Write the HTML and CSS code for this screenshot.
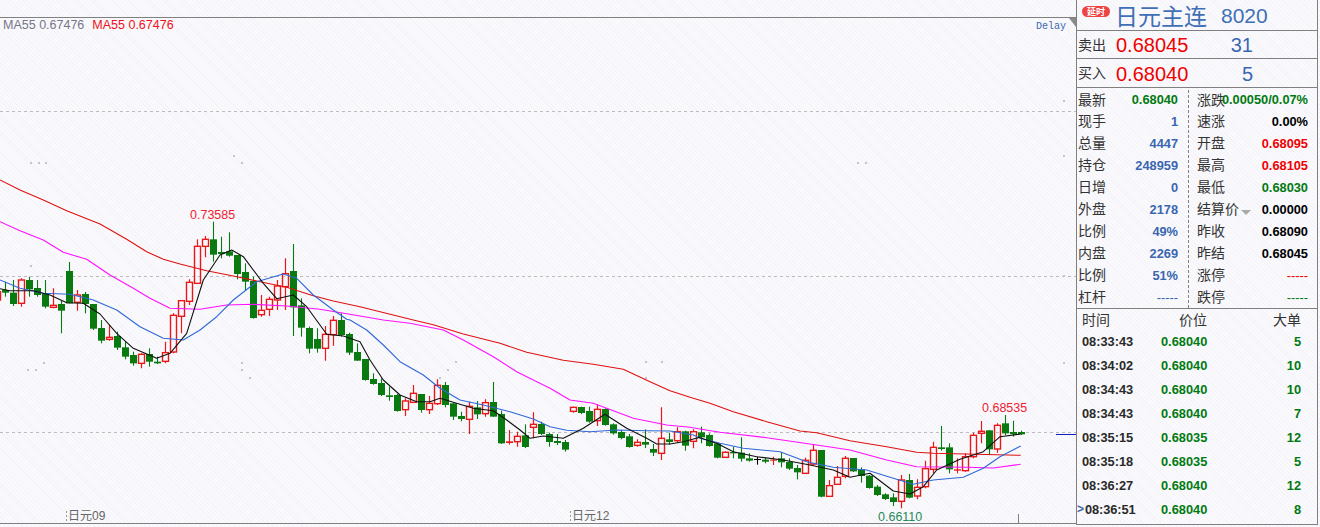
FILE: index.html
```html
<!DOCTYPE html>
<html lang="zh">
<head>
<meta charset="utf-8">
<title>日元主连 8020</title>
<link rel="stylesheet" href="styles.css">
</head>
<body>
<div class="app">
  <section class="chart">
    <div class="legend"><span class="legend-grey">MA55 0.67476</span><span class="legend-red">MA55 0.67476</span></div>
    <span class="delay">Delay</span>
    <svg id="plot" class="plot" width="1076" height="527" viewBox="0 0 1076 527"></svg>
    <span class="wedge"></span>
  </section>
  <aside class="panel">
    <header class="title">
      <span class="badge">延时</span>
      <span class="name">日元主连</span>
      <span class="code">8020</span>
    </header>
    <div class="quote quote-sell"><span class="cn">卖出</span><span class="quote-price">0.68045</span><span class="quote-vol">31</span></div>
    <div class="quote quote-buy"><span class="cn">买入</span><span class="quote-price">0.68040</span><span class="quote-vol">5</span></div>
    <div class="stats">
      <div class="col col-left">
        <div class="row"><span class="cn">最新</span><b class="green">0.68040</b></div>
        <div class="row"><span class="cn">现手</span><b class="blue">1</b></div>
        <div class="row"><span class="cn">总量</span><b class="blue">4447</b></div>
        <div class="row"><span class="cn">持仓</span><b class="blue">248959</b></div>
        <div class="row"><span class="cn">日增</span><b class="blue">0</b></div>
        <div class="row"><span class="cn">外盘</span><b class="blue">2178</b></div>
        <div class="row"><span class="cn">比例</span><b class="blue">49%</b></div>
        <div class="row"><span class="cn">内盘</span><b class="blue">2269</b></div>
        <div class="row"><span class="cn">比例</span><b class="blue">51%</b></div>
        <div class="row"><span class="cn">杠杆</span><span class="dash blue">-----</span></div>
      </div>
      <div class="col col-right">
        <div class="row"><span class="cn">涨跌</span><b class="green change">0.00050/0.07%</b></div>
        <div class="row"><span class="cn">速涨</span><b class="black">0.00%</b></div>
        <div class="row"><span class="cn">开盘</span><b class="red">0.68095</b></div>
        <div class="row"><span class="cn">最高</span><b class="red">0.68105</b></div>
        <div class="row"><span class="cn">最低</span><b class="green">0.68030</b></div>
        <div class="row"><span class="cn settle">结算价<i class="caret"></i></span><b class="black">0.00000</b></div>
        <div class="row"><span class="cn">昨收</span><b class="black">0.68090</b></div>
        <div class="row"><span class="cn">昨结</span><b class="black">0.68045</b></div>
        <div class="row"><span class="cn">涨停</span><span class="dash red">-----</span></div>
        <div class="row"><span class="cn">跌停</span><span class="dash green">-----</span></div>
      </div>
    </div>
    <div class="trades">
      <div class="trade trade-head"><span class="cn">时间</span><span class="cn num">价位</span><span class="cn num">大单</span></div>
      <div class="trade"><b class="time">08:33:43</b><b class="green num">0.68040</b><b class="green num">5</b></div>
      <div class="trade"><b class="time">08:34:02</b><b class="green num">0.68040</b><b class="green num">10</b></div>
      <div class="trade"><b class="time">08:34:43</b><b class="green num">0.68040</b><b class="green num">10</b></div>
      <div class="trade"><b class="time">08:34:43</b><b class="green num">0.68040</b><b class="green num">7</b></div>
      <div class="trade"><b class="time">08:35:15</b><b class="green num">0.68035</b><b class="green num">12</b></div>
      <div class="trade"><b class="time">08:35:18</b><b class="green num">0.68035</b><b class="green num">5</b></div>
      <div class="trade"><b class="time">08:36:27</b><b class="green num">0.68040</b><b class="green num">12</b></div>
      <div class="trade trade-current"><span class="marker">&gt;</span><b class="time">08:36:51</b><b class="green num">0.68040</b><b class="green num">8</b></div>
    </div>
  </aside>
</div>
<script src="chart.js"></script>
</body>
</html>
```
FILE: styles.css
```css
* { box-sizing: border-box; }
html, body { margin: 0; height: 100%; overflow: hidden; }
body {
  background-color: #f8f8fc;
  background-image: repeating-linear-gradient(45deg, #fafafd 0 1px, #f3f3f9 1px 2px, #fafafd 2px 3px);
  font-family: "Liberation Sans", Arial, sans-serif;
  color: #333;
}
.app { display: flex; width: 1320px; height: 527px; }

/* chart */
.chart { position: relative; width: 1076px; height: 527px; flex: none; }
.plot { position: absolute; inset: 0; display: block; }
.legend {
  position: absolute; left: 3px; top: 18px; z-index: 1;
  display: flex; gap: 8px;
  font-size: 12.5px; line-height: 15px; white-space: nowrap;
}
.legend-grey { color: #778; }
.legend-red { color: #f01020; }
.delay {
  position: absolute; left: 1036px; top: 21px; z-index: 1;
  font-family: "Liberation Mono", monospace; font-size: 10px; line-height: 12px; color: #3a66b0;
}
.wedge {
  position: absolute; right: 0; top: 18px; width: 0; height: 0;
  border-top: 9px solid transparent; border-right: 7px solid #8a8a8a; border-bottom: 0 solid transparent;
  transform: scaleY(-1);
}
.t-high { font: 12.5px "Liberation Sans", Arial, sans-serif; fill: #f02030; }
.t-low { font: 12.5px "Liberation Sans", Arial, sans-serif; fill: #1f8a5a; }
.t-axis { font: 12px "Liberation Sans", "Noto Sans CJK SC", sans-serif; fill: #666; }

/* panel */
.panel {
  width: 242px; height: 525px; flex: none;
  border-left: 1px solid #808080; border-right: 1px solid #808080; border-bottom: 1px solid #808080;
  display: flex; flex-direction: column;
}
.cn { font-family: "Noto Sans CJK SC", "Liberation Sans", sans-serif; font-size: 14px; font-weight: 400; color: #333; white-space: nowrap; }
.title {
  height: 31px; flex: none; border-bottom: 1px solid #808080;
  display: flex; align-items: flex-start; padding-left: 5px; white-space: nowrap;
}
.badge {
  margin-top: 6px; width: 28px; height: 11px; border-radius: 6px;
  background: #ee4444; color: #fff;
  font: 700 9px/11px "Noto Sans CJK SC", sans-serif; text-align: center;
}
.name {
  margin-left: 5px; margin-top: 1px;
  font: 400 23px/28px "Noto Sans CJK SC", sans-serif; color: #3f6fb5;
}
.code { margin-left: 14px; margin-top: 2px; font-size: 21px; line-height: 27px; color: #3f6fb5; }
.quote {
  flex: none; border-bottom: 1px solid #808080;
  display: grid; grid-template-columns: 38px 72px 65px; align-items: center; padding-left: 1px;
}
.quote .cn { margin-bottom: 2px; }
.quote-price, .quote-vol { margin-top: 2px; }
.quote-sell { height: 28px; }
.quote-buy { height: 29px; }
.quote-price { font-size: 20px; color: #f00000; }
.quote-vol { font-size: 20px; color: #3a66b0; text-align: right; }

.stats { flex: none; height: 221px; display: grid; grid-template-columns: 111px 1fr; border-bottom: 1px solid #808080; }
.col { display: flex; flex-direction: column; }
.col-left { padding: 0 10px 0 1px; }
.col-right { padding: 0 9px 0 8px; border-left: 1px dashed #808080; margin: 2px 0 1px; }
.col-right .row:first-child { margin-top: -2px; }
.row { height: 22px; flex: none; display: flex; justify-content: space-between; align-items: center; white-space: nowrap; }
.row .cn { margin-bottom: 2px; }
.row:first-child .cn { margin-bottom: 0; }
b, .dash { font-size: 12.8px; font-weight: 700; }
.dash { font-weight: 400; }
.change { margin-left: -4px; }
.green { color: #007a10; }
.blue { color: #3a66b0; }
.red { color: #f00000; }
.black { color: #000; }
.settle { position: relative; }
.caret {
  display: inline-block; margin-left: 2px; vertical-align: -1px; width: 0; height: 0;
  border-left: 5px solid transparent; border-right: 5px solid transparent; border-top: 5px solid #aaa;
}

.trades { flex: 1; }
.trade {
  position: relative; height: 24px; display: grid; grid-template-columns: 79px 46px 1fr;
  padding: 0 16px 0 5px; align-items: center; white-space: nowrap;
}
.trade-head { height: 20px; padding-bottom: 1px; }
.num { text-align: right; }
.time { color: #2a2a2a; }
.trade-current .time { margin-left: 3px; letter-spacing: -0.1px; }
.marker { position: absolute; left: 0; top: 5px; font-size: 12px; line-height: 14px; font-weight: 700; color: #3a66b0; }
```
FILE: chart.js
```js
// Candles: [up?, bodyTop, bodyBottom, high, low] in 3x crop units, with a y origin per block.
var U = 1, D = 0, S = 2, X = 3; // up, down, solid up, doji
var blocks = [
  { y0: 200, first: -1, rows: [
    [U,275,300,260,305],[D,270,278,245,290],[D,278,312,240,318],[U,240,310,235,320],[D,240,268,230,290],[D,264,285,240,290],
    [D,280,320,240,325],[U,316,322,265,325],[D,312,332,300,400],[D,213,310,186,310],[U,285,307,270,332],[D,282,312,276,340],
    [D,312,386,312,390],[D,384,422,360,430],[U,412,418,375,422],[D,408,443,395,450],[D,442,470,425,478],[D,465,490,455,497],
    [U,463,490,460,505],[D,462,485,445,500],[D,485,490,470,492],[U,458,484,425,490],[U,346,456,340,460],[U,302,349,300,400],
    [U,247,304,238,315],[U,139,250,118,250],[U,118,139,108,172],[D,118,164,65,185],[D,156,162,110,175],[D,154,167,97,170],
    [D,165,222,165,238],[D,216,245,190,272],[D,243,354,230,356],[U,331,344,285,350],[U,298,328,290,348],[U,258,300,240,330],
    [U,221,260,175,330],[D,213,322,132,408],[D,316,383,295,410],[D,384,446,380,460],[D,417,446,385,458],[U,403,445,378,482],
    [U,361,404,348,437],[D,360,405,340,410],[D,402,458,398,465],[D,456,482,430,482]
  ]},
  { y0: 320, first: 45, rows: [
    [D,117,180,117,182],[D,177,192,160,194],[D,189,225,175,228],[D,226,231,200,242],[D,225,273,222,275],[U,243,269,235,288],
    [U,220,247,195,248],[D,222,270,222,278],[U,250,269,228,282],[U,196,251,178,255],[D,195,255,186,262],[D,250,290,250,300],
    [D,288,297,275,304],[U,259,298,245,342],[D,262,283,243,297],[U,248,281,238,290],[D,246,290,186,290],[D,282,370,272,372],
    [S,364,369,330,374],[U,349,365,335,380],[D,346,381,313,384],[U,313,322,277,355],[D,312,342,305,345],[D,342,366,338,380],
    [D,363,369,342,375],[D,366,389,360,395],[U,262,274,260,278],[D,261,279,260,282],[D,273,305,260,308],[U,268,302,253,318],
    [D,267,315,265,317],[D,313,340,310,344],[D,336,354,330,358],[D,349,381,342,383],[U,367,376,358,380],[D,366,374,328,384],
    [D,387,398,372,408],[U,355,400,262,420],[D,358,366,338,374],[U,335,362,322,368],[D,334,377,332,392],[U,335,364,328,385],
    [D,337,352,320,370],[D,345,378,340,380]
  ]},
  { y0: 390, first: 89, rows: [
    [D,160,203,158,205],[U,187,202,184,204],[D,186,190,170,205],[D,188,206,142,215],[D,205,212,190,215],[X,207,208,200,224],
    [D,209,215,203,220],[S,209,212,200,225],[D,205,217,187,232],[D,216,236,205,240],[D,234,247,225,268],[U,211,250,203,250],
    [U,181,222,163,225],[D,180,320,180,322],[U,287,319,270,320],[U,262,283,228,285],[U,205,259,198,265],[D,204,244,204,246],
    [D,238,258,232,278],[D,257,294,255,296],[D,290,315,285,318],[D,313,327,310,330],[D,322,336,310,348],[U,270,334,255,355],
    [D,270,323,252,325],[U,292,318,268,328],[U,236,290,212,295],[U,172,238,155,250],[D,172,177,108,182],[D,172,238,160,250],
    [S,238,242,205,250],[U,200,242,190,245],[U,136,200,128,205],[U,124,130,93,160],[D,121,178,121,195],[U,106,177,100,188],
    [D,100,130,75,135],[D,126,132,92,140],[D,126,133,122,135]
  ]}
];

// Moving averages as point runs in the same crop units: [x0, y0, points...]
var lines = [
  { color: "#e01010", runs: [
    [0,0,[0,540,60,570,130,600]],
    [0,200,[200,32,300,72,380,118,440,155,490,178,540,192,620,212,700,228,780,245,860,262,940,287,1000,303,1080,320]],
    [350,320,[190,0,250,14,340,42,450,70,530,97,640,121,730,133,820,148,900,185,960,212,1020,232]],
    [700,390,[30,40,100,65,200,95,300,123,350,128,450,152,560,170,650,187,700,190,962,196]]
  ]},
  { color: "#ff10ff", runs: [
    [0,200,[0,65,60,92,130,120,190,157,260,178,330,225,400,265,450,295,510,325,600,328,680,315,760,313,860,318,960,328,1080,348]],
    [350,320,[100,0,180,10,280,30,340,60,430,110,500,155,600,205,660,240,730,250,850,295,950,315,1020,322]],
    [700,390,[0,117,60,127,200,143,350,165,450,180,560,210,650,230,800,232,880,234,962,223]]
  ]},
  { color: "#3068d8", runs: [
    [0,200,[0,240,60,265,130,280,210,283,280,300,350,330,420,380,490,415,550,420,600,390,650,350,700,300,770,245,850,222,890,235,940,285,1000,330,1040,358]],
    [350,320,[0,0,50,30,100,75,150,125,220,165,270,205,330,240,400,255,480,275,550,297,600,320,650,331,720,335,800,330,890,332,960,333,1030,345]],
    [700,390,[0,145,60,160,130,175,240,185,320,215,400,232,500,240,580,265,640,283,700,270,790,262,850,235,900,200,962,168]]
  ]},
  { color: "#101010", runs: [
    [0,200,[0,266,30,272,100,272,150,285,200,308,250,310,300,342,350,400,400,445,470,475,510,460,560,400,610,240,660,165,695,150,730,170,790,250,830,296,880,285,920,320,980,403,1030,408]],
    [350,320,[0,55,30,65,60,120,100,180,150,225,200,245,240,245,270,235,310,247,370,265,430,272,470,300,510,330,540,355,580,348,640,355,700,325,765,283,830,325,890,355,920,372,960,372,1000,365,1050,352]],
    [700,390,[0,143,50,160,100,185,170,200,250,210,330,225,400,240,450,262,510,250,580,303,630,312,670,290,710,240,780,208,850,185,900,140,962,132]]
  ]}
];

var specks = [[30,162],[38,162],[45,162],[233,155],[241,162],[857,162],[865,162],[1063,155],[1063,275],[1063,362],
  [43,362],[27,369],[35,369],[241,362],[241,369],[249,377],[455,361],[447,369],[439,377],[645,361],[661,361],[645,377],
  [30,265],[1063,100]];

var GREEN = "#087a10", RED = "#e81818", NS = "http://www.w3.org/2000/svg";
var svg = document.getElementById("plot");

function add(tag, attrs, text) {
  var el = document.createElementNS(NS, tag);
  for (var k in attrs) el.setAttribute(k, attrs[k]);
  if (text) el.textContent = text;
  svg.appendChild(el);
  return el;
}
function hline(y, x1, x2, color, dash) {
  var a = { x1: x1, x2: x2, y1: y + 0.5, y2: y + 0.5, stroke: color, "stroke-width": 1 };
  if (dash) a["stroke-dasharray"] = dash;
  add("line", a);
}

// frame and grid
hline(17, 0, 1076, "#808080");
hline(523, 0, 1076, "#808080");
[111, 276, 432].forEach(function (y) { hline(y, 0, 1076, "#bdbdbd", "3 3"); });
specks.forEach(function (p) { add("rect", { x: p[0], y: p[1], width: 2, height: 2, fill: "#c4c4cc" }); });

// candles
blocks.forEach(function (b) {
  b.rows.forEach(function (r, i) {
    var cx = 5.5 + 8 * (b.first + i);
    var py = function (v) { return b.y0 + v / 3; };
    var top = py(r[1]), bot = py(r[2]), hi = py(r[3]), lo = py(r[4]), kind = r[0];
    var color = kind === D ? GREEN : kind === X ? "#000" : RED;
    if (kind === U) {
      add("path", { d: "M" + cx + " " + hi + "V" + top + "M" + cx + " " + bot + "V" + lo, stroke: color, fill: "none", "stroke-width": 1.2 });
      add("rect", { x: cx - 3, y: top, width: 6, height: bot - top, fill: "none", stroke: color, "stroke-width": 1.4 });
    } else {
      add("path", { d: "M" + cx + " " + hi + "V" + lo, stroke: color, fill: "none", "stroke-width": 1.1 });
      add("rect", { x: cx - 3.5, y: top, width: 7, height: Math.max(bot - top, 1), fill: color });
    }
  });
});

// moving averages
lines.forEach(function (l) {
  var pts = [];
  l.runs.forEach(function (run) {
    var xo = run[0], yo = run[1], a = run[2];
    for (var i = 0; i < a.length; i += 2) pts.push((xo + a[i] / 3).toFixed(1) + "," + (yo + a[i + 1] / 3).toFixed(1));
  });
  add("polyline", { points: pts.join(" "), fill: "none", stroke: l.color, "stroke-width": 1.1, "stroke-linejoin": "round" });
});

// axis marks and labels
hline(434, 1056, 1076, "#1020c0");
add("line", { x1: 1018.5, x2: 1018.5, y1: 514, y2: 523, stroke: "#808080" });
add("text", { x: 190, y: 219, class: "t-high" }, "0.73585");
add("text", { x: 982, y: 412, class: "t-high" }, "0.68535");
add("text", { x: 878, y: 521, class: "t-low" }, "0.66110");
add("line", { x1: 66.5, x2: 66.5, y1: 511, y2: 522, stroke: "#999", "stroke-dasharray": "2 2" });
add("line", { x1: 570.5, x2: 570.5, y1: 511, y2: 522, stroke: "#999", "stroke-dasharray": "2 2" });
add("text", { x: 68, y: 520, class: "t-axis" }, "日元09");
add("text", { x: 572, y: 520, class: "t-axis" }, "日元12");
```
